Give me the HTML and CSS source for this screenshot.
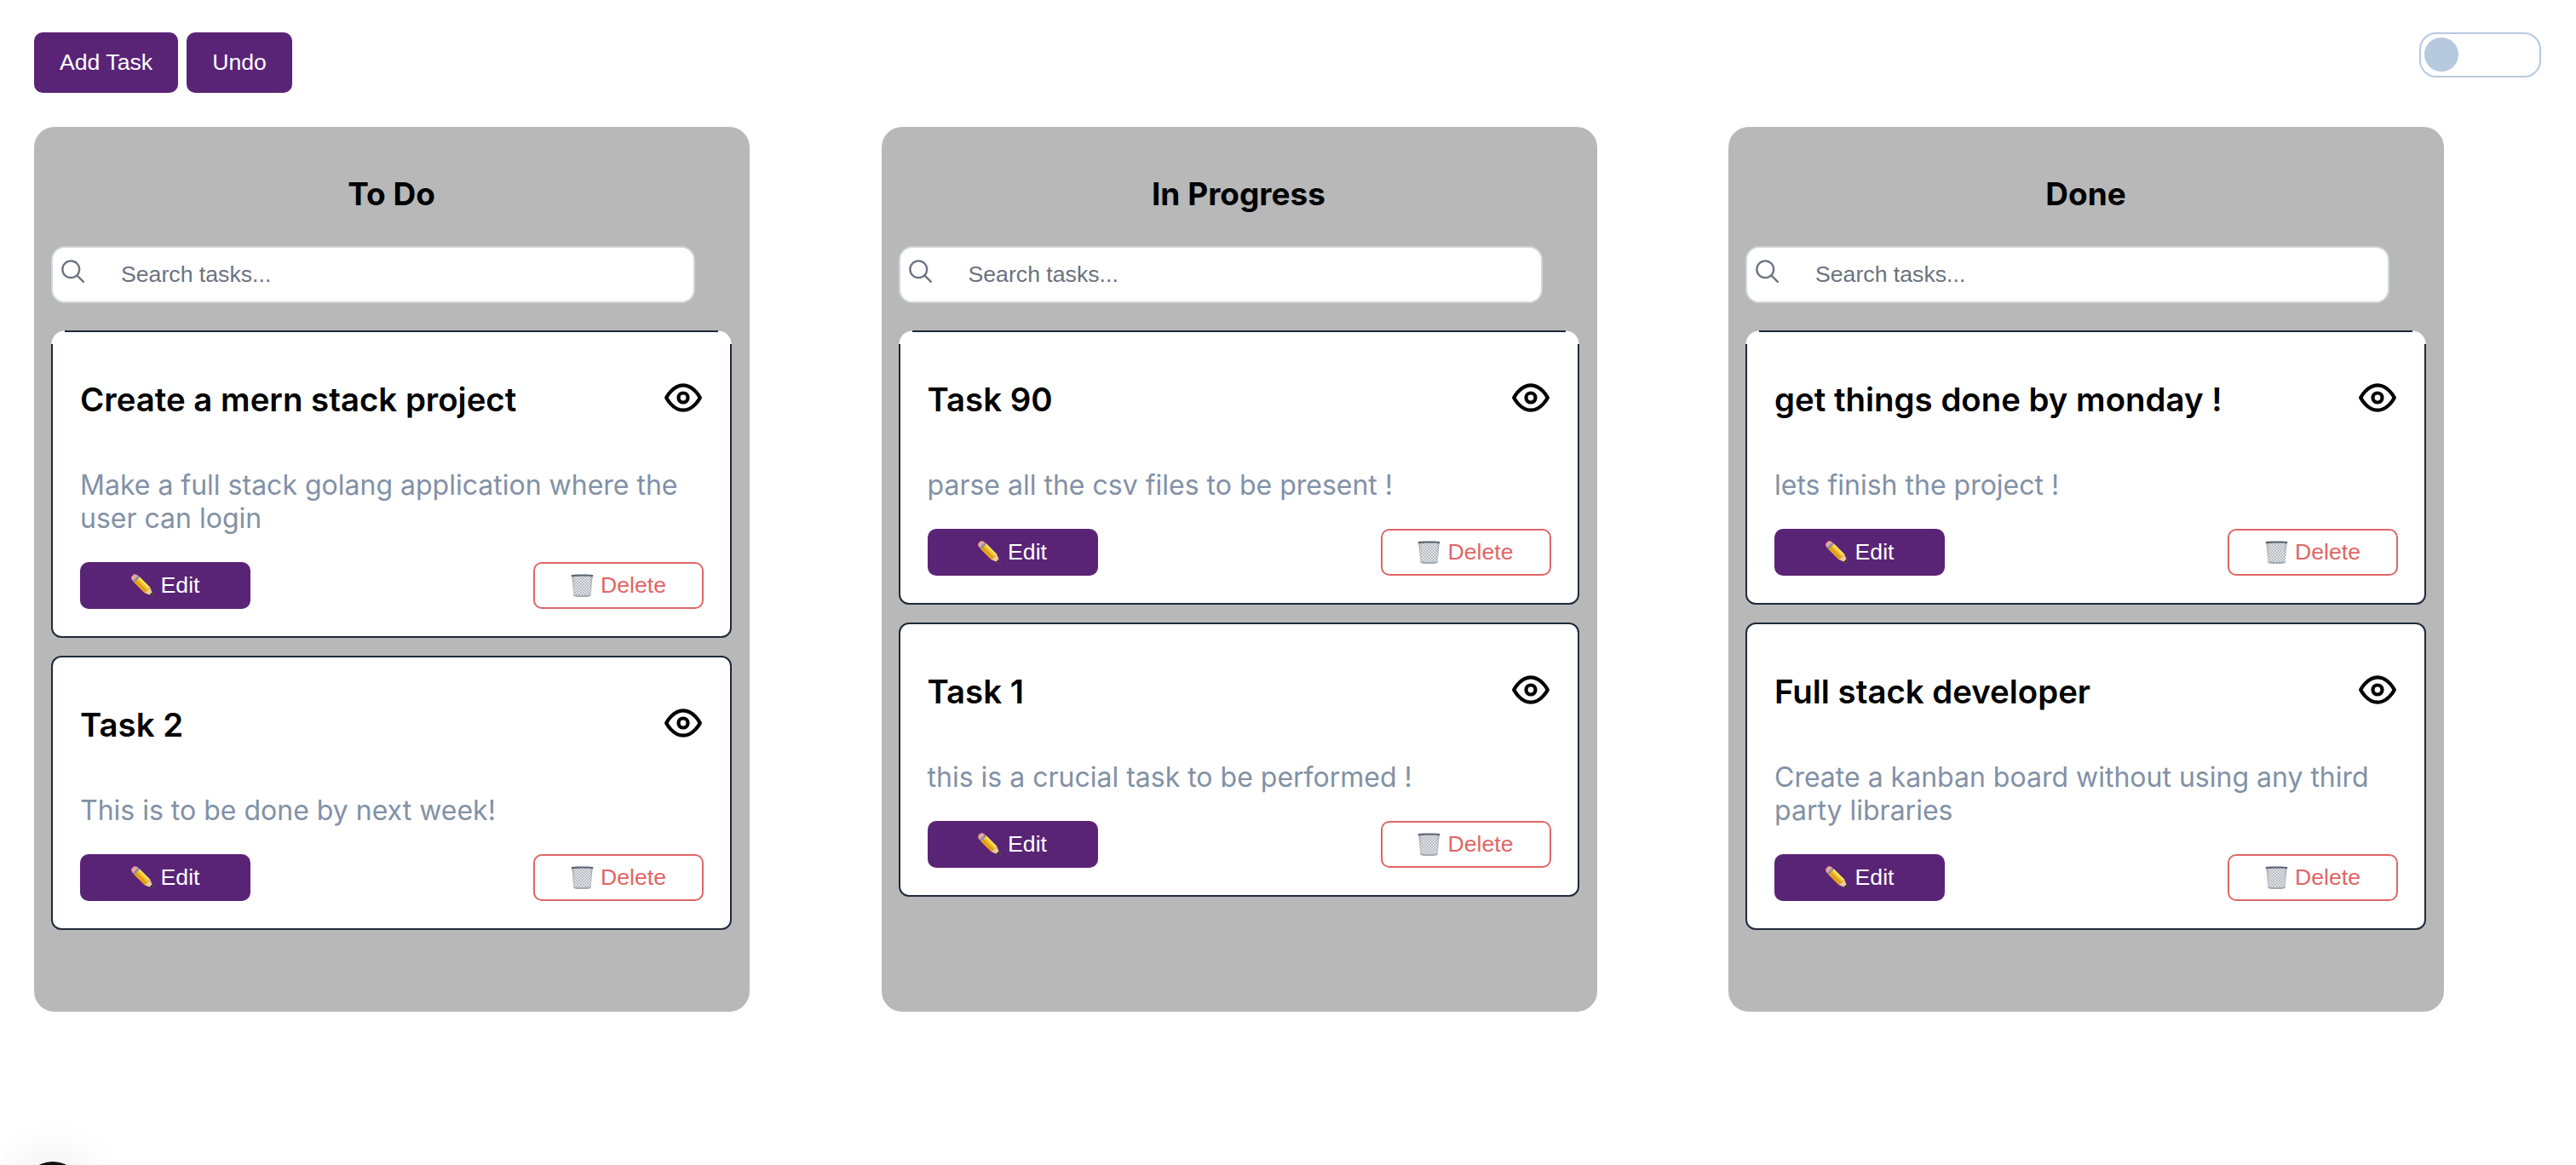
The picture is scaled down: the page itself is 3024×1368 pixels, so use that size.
FILE: index.html
```html
<!DOCTYPE html>
<html lang="en">
<head>
    <meta charset="UTF-8">
    <meta name="viewport" content="width=device-width, initial-scale=1.0">
    <title>Kanban Board</title>
    <link rel="stylesheet" href="styles.css">
</head>
<body>

    <svg class="sprite" aria-hidden="true">
        <defs>
            <pattern id="mesh" width="3.4" height="3.4" patternUnits="userSpaceOnUse">
                <rect width="3.4" height="3.4" fill="#f0f2f4"/>
                <path d="M0 0L3.4 3.4M3.4 0L0 3.4" stroke="#979ea6" stroke-width="0.7"/>
            </pattern>
            <linearGradient id="binShade" x1="0" y1="0" x2="1" y2="0">
                <stop offset="0" stop-color="#5f6973" stop-opacity="0.4"/>
                <stop offset="0.25" stop-color="#fff" stop-opacity="0"/>
                <stop offset="0.75" stop-color="#fff" stop-opacity="0"/>
                <stop offset="1" stop-color="#5f6973" stop-opacity="0.4"/>
            </linearGradient>
        </defs>
        <symbol id="icon-search" viewBox="0 0 24 24">
            <circle cx="10.5" cy="10.5" r="8.5" fill="none" stroke="currentColor" stroke-width="2"/>
            <path d="M17 17l6 6" fill="none" stroke="currentColor" stroke-width="2" stroke-linecap="round"/>
        </symbol>
        <symbol id="icon-eye" viewBox="0 0 24 24">
            <path d="M1.2 12s4-8 10.8-8 10.8 8 10.8 8-4 8-10.8 8-10.8-8-10.8-8z" fill="none" stroke="currentColor" stroke-width="2.3" stroke-linejoin="round"/>
            <circle cx="12" cy="12" r="3" fill="none" stroke="currentColor" stroke-width="2.3"/>
        </symbol>
        <symbol id="icon-pencil" viewBox="0 0 27 27">
            <path d="M22.2 15.8L26.6 26.6L15.8 22.2z" fill="#eccb98"/>
            <path d="M24.5 21.6L26.6 26.6L21.6 24.5z" fill="#2c2a2a"/>
            <path d="M9.2 2.8L22.2 15.8L15.8 22.2L2.8 9.2z" fill="#f6c62e"/>
            <path d="M6 6L19 19L15.8 22.2L2.8 9.2z" fill="#e3a01c"/>
            <path d="M9.2 2.8L22.2 15.8L20.8 17.2L7.8 4.2z" fill="#fde36a"/>
            <path d="M7.4 1.2L10 3.8L3.8 10L1.2 7.4z" fill="#8d909c"/>
            <path d="M3 .6C4.6 -.4 6.4 .4 8 2L2 8C.4 6.4 -.4 4.6 .6 3z" fill="#eba3a3"/>
        </symbol>
        <symbol id="icon-bin" viewBox="0 0 27 27">
            <path d="M1.4 3L3.4 25C3.6 26.4 6 27 13.5 27S23.4 26.4 23.6 25L25.6 3z" fill="url(#mesh)"/>
            <path d="M1.4 3L3.4 25C3.6 26.4 6 27 13.5 27S23.4 26.4 23.6 25L25.6 3z" fill="url(#binShade)"/>
            <path d="M3.3 24C6 25.2 21 25.2 23.7 24L23.6 25.2C23.4 26.4 20 27 13.5 27S3.6 26.4 3.4 25.2z" fill="#a2aab3"/>
            <path d="M.6 1.2C2 .3 25 .3 26.4 1.2L26 3.2C22 2.5 5 2.5 1 3.2z" fill="#5c6670"/>
        </symbol>
    </svg>

    <div class="topbar">
        <div class="actions">
            <button class="btn-primary">Add Task</button>
            <button class="btn-primary">Undo</button>
        </div>
        <div class="theme-toggle"><span class="theme-knob"></span></div>
    </div>

    <div class="board">

        <section class="column">
            <h2>To Do</h2>
            <div class="search">
                <svg class="search-icon"><use href="#icon-search"/></svg>
                <input type="text" placeholder="Search tasks...">
            </div>
            <div class="task-list">
                <article class="task">
                    <div class="task-head">
                        <h3>Create a mern stack project</h3>
                        <svg class="eye"><use href="#icon-eye"/></svg>
                    </div>
                    <p>Make a full stack golang application where the user can login</p>
                    <div class="task-actions">
                        <button class="btn-edit"><svg class="emoji"><use href="#icon-pencil"/></svg>Edit</button>
                        <button class="btn-delete"><svg class="emoji"><use href="#icon-bin"/></svg>Delete</button>
                    </div>
                </article>
                <article class="task">
                    <div class="task-head">
                        <h3>Task 2</h3>
                        <svg class="eye"><use href="#icon-eye"/></svg>
                    </div>
                    <p>This is to be done by next week!</p>
                    <div class="task-actions">
                        <button class="btn-edit"><svg class="emoji"><use href="#icon-pencil"/></svg>Edit</button>
                        <button class="btn-delete"><svg class="emoji"><use href="#icon-bin"/></svg>Delete</button>
                    </div>
                </article>
            </div>
        </section>

        <section class="column">
            <h2>In Progress</h2>
            <div class="search">
                <svg class="search-icon"><use href="#icon-search"/></svg>
                <input type="text" placeholder="Search tasks...">
            </div>
            <div class="task-list">
                <article class="task">
                    <div class="task-head">
                        <h3>Task 90</h3>
                        <svg class="eye"><use href="#icon-eye"/></svg>
                    </div>
                    <p>parse all the csv files to be present !</p>
                    <div class="task-actions">
                        <button class="btn-edit"><svg class="emoji"><use href="#icon-pencil"/></svg>Edit</button>
                        <button class="btn-delete"><svg class="emoji"><use href="#icon-bin"/></svg>Delete</button>
                    </div>
                </article>
                <article class="task">
                    <div class="task-head">
                        <h3>Task 1</h3>
                        <svg class="eye"><use href="#icon-eye"/></svg>
                    </div>
                    <p>this is a crucial task to be performed !</p>
                    <div class="task-actions">
                        <button class="btn-edit"><svg class="emoji"><use href="#icon-pencil"/></svg>Edit</button>
                        <button class="btn-delete"><svg class="emoji"><use href="#icon-bin"/></svg>Delete</button>
                    </div>
                </article>
            </div>
        </section>

        <section class="column">
            <h2>Done</h2>
            <div class="search">
                <svg class="search-icon"><use href="#icon-search"/></svg>
                <input type="text" placeholder="Search tasks...">
            </div>
            <div class="task-list">
                <article class="task">
                    <div class="task-head">
                        <h3>get things done by monday !</h3>
                        <svg class="eye"><use href="#icon-eye"/></svg>
                    </div>
                    <p>lets finish the project !</p>
                    <div class="task-actions">
                        <button class="btn-edit"><svg class="emoji"><use href="#icon-pencil"/></svg>Edit</button>
                        <button class="btn-delete"><svg class="emoji"><use href="#icon-bin"/></svg>Delete</button>
                    </div>
                </article>
                <article class="task">
                    <div class="task-head">
                        <h3>Full stack developer</h3>
                        <svg class="eye"><use href="#icon-eye"/></svg>
                    </div>
                    <p>Create a kanban board without using any third party libraries</p>
                    <div class="task-actions">
                        <button class="btn-edit"><svg class="emoji"><use href="#icon-pencil"/></svg>Edit</button>
                        <button class="btn-delete"><svg class="emoji"><use href="#icon-bin"/></svg>Delete</button>
                    </div>
                </article>
            </div>
        </section>

    </div>

    <div class="dev-badge"></div>

</body>
</html>
```

FILE: styles.css
```css
html {
    height: 100%;
    overflow: hidden;
}
body {
    margin: 0;
    padding: 38px 41px 0 40px;
    background-color: #fff;
    font-family: "Inter", sans-serif;
}
button, input {
    font-family: "Liberation Sans", Arial, sans-serif;
    font-size: 26.67px;
}
.sprite {
    position: absolute;
    width: 0;
    height: 0;
}

/* top bar */
.topbar {
    display: flex;
    justify-content: space-between;
    height: 71px;
    margin-bottom: 40px;
}
.actions {
    display: flex;
    gap: 10px;
}
.btn-primary {
    background-color: #5a2476;
    color: #fff;
    border: none;
    border-radius: 10px;
    padding: 0 30px;
}
.theme-toggle {
    box-sizing: border-box;
    width: 143px;
    height: 53px;
    padding: 4px;
    border: 2px solid #b6c9df;
    border-radius: 20px;
}
.theme-knob {
    display: block;
    width: 40px;
    height: 40px;
    border-radius: 50%;
    background-color: #b6c9df;
}

/* board */
.board {
    display: flex;
    gap: 154.5px;
}
.column {
    box-sizing: border-box;
    width: 840px;
    padding: 0 21px 96px 20px;
    background-color: #b8b8b8;
    border-radius: 24px;
}
.column h2 {
    margin: 0;
    padding-top: 56px;
    height: 140px;
    box-sizing: border-box;
    text-align: center;
    font-size: 37px;
    line-height: 46px;
    font-weight: 700;
    color: #000;
}

/* search */
.search {
    position: relative;
    width: 756px;
    margin-bottom: 32px;
}
.search input {
    display: block;
    box-sizing: border-box;
    width: 100%;
    height: 67px;
    padding: 0 20px 0 80px;
    border: 2px solid #d1d5db;
    border-radius: 16px;
    background-color: #fff;
    color: #111;
}
.search input::placeholder {
    color: #6b7280;
    opacity: 1;
}
.search-icon {
    position: absolute;
    left: 11px;
    top: 15px;
    width: 28px;
    height: 28px;
    color: #6b7280;
}

/* tasks */
.task-list {
    display: flex;
    flex-direction: column;
    gap: 21px;
}
.task {
    position: relative;
    padding: 32px 31px 32px 32px;
    border: 2px solid #1e293b;
    border-radius: 12px;
    background-color: #fff;
}
/* first card in a column has wider, unbordered top corners */
.task:first-child::before,
.task:first-child::after {
    content: "";
    position: absolute;
    top: -2px;
    width: 16px;
    height: 16px;
}
.task:first-child::before {
    left: -2px;
    background: radial-gradient(circle at 100% 100%, #fff 15px, #b8b8b8 16px);
}
.task:first-child::after {
    right: -2px;
    background: radial-gradient(circle at 0 100%, #fff 15px, #b8b8b8 16px);
}
.task-head {
    display: flex;
    justify-content: space-between;
    align-items: flex-start;
    height: 128px;
}
.task-head h3 {
    margin: 23px 0 0;
    font-size: 38.4px;
    line-height: 48px;
    font-weight: 600;
    color: #000;
}
.eye {
    flex: none;
    width: 44px;
    height: 44px;
    margin-top: 23px;
    margin-right: 2px;
    color: #000;
}
.task p {
    margin: 0 0 32px;
    font-size: 32px;
    line-height: 39px;
    color: #8291a6;
}
.task-actions {
    display: flex;
    justify-content: space-between;
}
.btn-edit, .btn-delete {
    display: flex;
    align-items: center;
    justify-content: center;
    box-sizing: border-box;
    width: 200px;
    height: 55px;
    padding: 0;
    border-radius: 10px;
}
.btn-edit {
    background-color: #5a2476;
    color: #fff;
    border: none;
}
.btn-delete {
    background-color: #fff;
    color: #e06666;
    border: 2px solid #e06666;
}
.emoji {
    flex: none;
    width: 27px;
    height: 27px;
    margin-right: 8px;
}

/* dev tools badge, mostly off screen */
.dev-badge {
    position: fixed;
    left: 26px;
    top: 1364px;
    width: 72px;
    height: 72px;
    border-radius: 50%;
    background-color: #111;
    box-shadow: 0 0 60px rgba(0, 0, 0, 0.12);
}
```
